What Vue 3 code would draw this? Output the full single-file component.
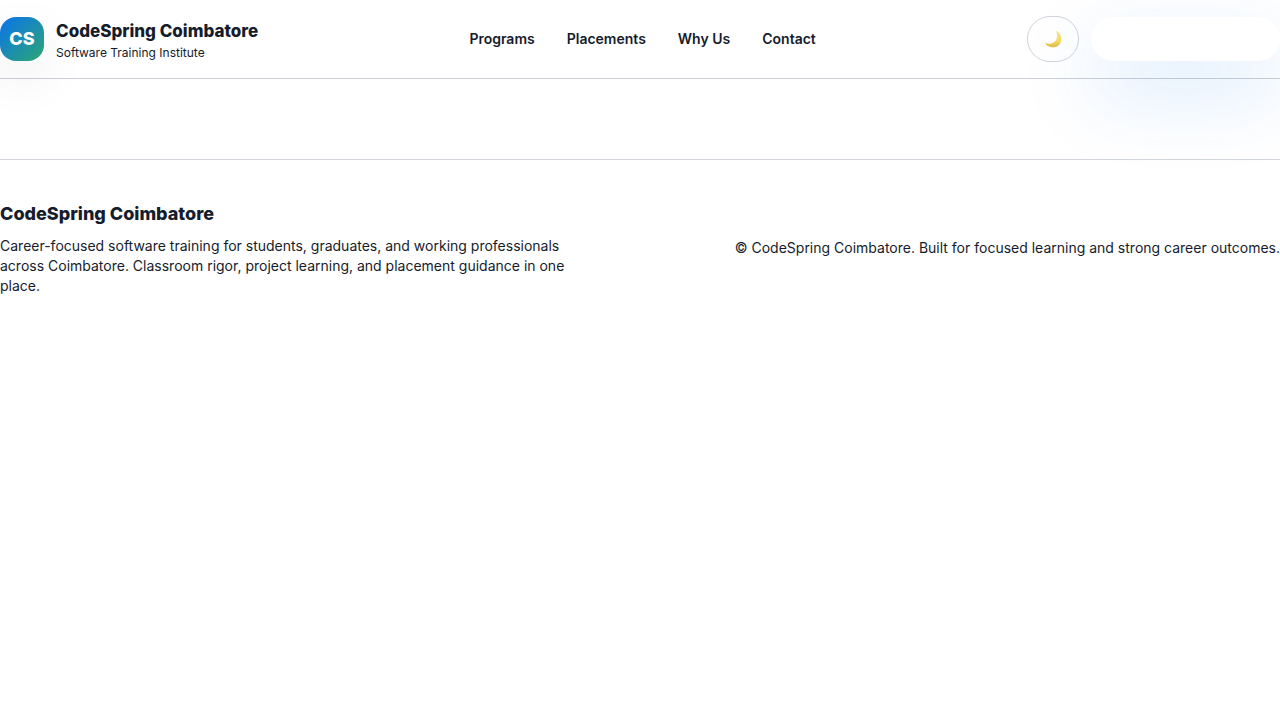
<script setup>
const links = [
  { label: 'Programs', href: '#programs' },
  { label: 'Placements', href: '#placements' },
  { label: 'Why Us', href: '#why-us' },
  { label: 'Contact', href: '#contact' },
]
</script>

<template>
  <div class="page">
    <header class="header">
      <a class="brand" href="#">
        <span class="logo">CS</span>
        <span class="brand-text">
          <span class="brand-name">CodeSpring Coimbatore</span>
          <span class="brand-tag">Software Training Institute</span>
        </span>
      </a>
      <nav class="nav">
        <a v-for="link in links" :key="link.label" :href="link.href">{{ link.label }}</a>
      </nav>
      <div class="actions">
        <button class="theme" type="button" aria-label="Toggle theme">
          <svg viewBox="0 0 18 18" width="18" height="18" aria-hidden="true">
            <defs>
              <linearGradient id="moon" x1="0" y1="0" x2="0" y2="1">
                <stop offset="0" stop-color="#f5e28a" />
                <stop offset="0.6" stop-color="#f5dc62" />
                <stop offset="1" stop-color="#e0ba48" />
              </linearGradient>
            </defs>
            <path d="M11.8 0.8C16 2.6 18.2 7.2 17 11.4C15.8 15.6 12 17.8 8 17.3C4.6 16.9 1.8 15.2 0.8 12.4C3.6 14 7.8 14.3 10.600 11.8C13.7 9 13.9 4.7 11.8 0.8Z" fill="url(#moon)" />
          </svg>
        </button>
        <button class="cta" type="button" aria-label="Contact us"></button>
      </div>
    </header>
    <footer class="footer">
      <div class="about">
        <h2>CodeSpring Coimbatore</h2>
        <p>Career-focused software training for students, graduates, and working professionals across Coimbatore. Classroom rigor, project learning, and placement guidance in one place.</p>
      </div>
      <p class="copyright">© CodeSpring Coimbatore. Built for focused learning and strong career outcomes.</p>
    </footer>
  </div>
</template>

<style>
body {
  background: #fff;
  overflow-x: hidden;
}
</style>

<style scoped>
.page {
  font-family: Inter, "Liberation Sans", sans-serif;
  font-size: 14px;
  line-height: 20px;
  color: #151c2c;
  overflow: hidden;
}
.header {
  display: flex;
  align-items: center;
  justify-content: space-between;
  padding: 16px 0;
  border-bottom: 1px solid #cbd0d6;
}
.brand {
  display: flex;
  align-items: center;
  gap: 12px;
  color: inherit;
  text-decoration: none;
}
.logo {
  display: flex;
  align-items: center;
  justify-content: center;
  width: 44px;
  height: 44px;
  border-radius: 16px;
  background: linear-gradient(135deg, #0b73ee, #2ca772);
  box-shadow: 0 18px 50px rgba(15, 23, 42, 0.08);
  color: #fff;
  font-size: 18px;
  font-weight: 800;
}
.brand-text {
  display: flex;
  flex-direction: column;
}
.brand-name {
  font-size: 17px;
  line-height: 28px;
  font-weight: 800;
}
.brand-tag {
  font-size: 12px;
  line-height: 16px;
}
.nav {
  display: flex;
  gap: 32px;
}
.nav a {
  color: inherit;
  font-weight: 600;
  text-decoration: none;
}
.actions {
  display: flex;
  align-items: center;
  gap: 12px;
}
button {
  padding: 0;
  border: 0;
  background: #fff;
  font: inherit;
  cursor: pointer;
}
.theme {
  display: flex;
  align-items: center;
  justify-content: center;
  width: 52px;
  height: 46px;
  border: 1px solid #cfd4da;
  border-radius: 24px;
  background: transparent;
}
.cta {
  width: 189px;
  height: 44px;
  border-radius: 22px;
  box-shadow: 0 30px 80px rgba(11, 115, 238, 0.18);
}
.footer {
  display: flex;
  align-items: center;
  justify-content: space-between;
  gap: 32px;
  margin-top: 80px;
  padding: 40px 0;
  border-top: 1px solid #d1d5db;
}
.about {
  max-width: 576px;
}
h2 {
  margin: 0 0 8px;
  font-size: 18px;
  line-height: 28px;
  font-weight: 800;
}
p {
  margin: 0;
}
</style>
